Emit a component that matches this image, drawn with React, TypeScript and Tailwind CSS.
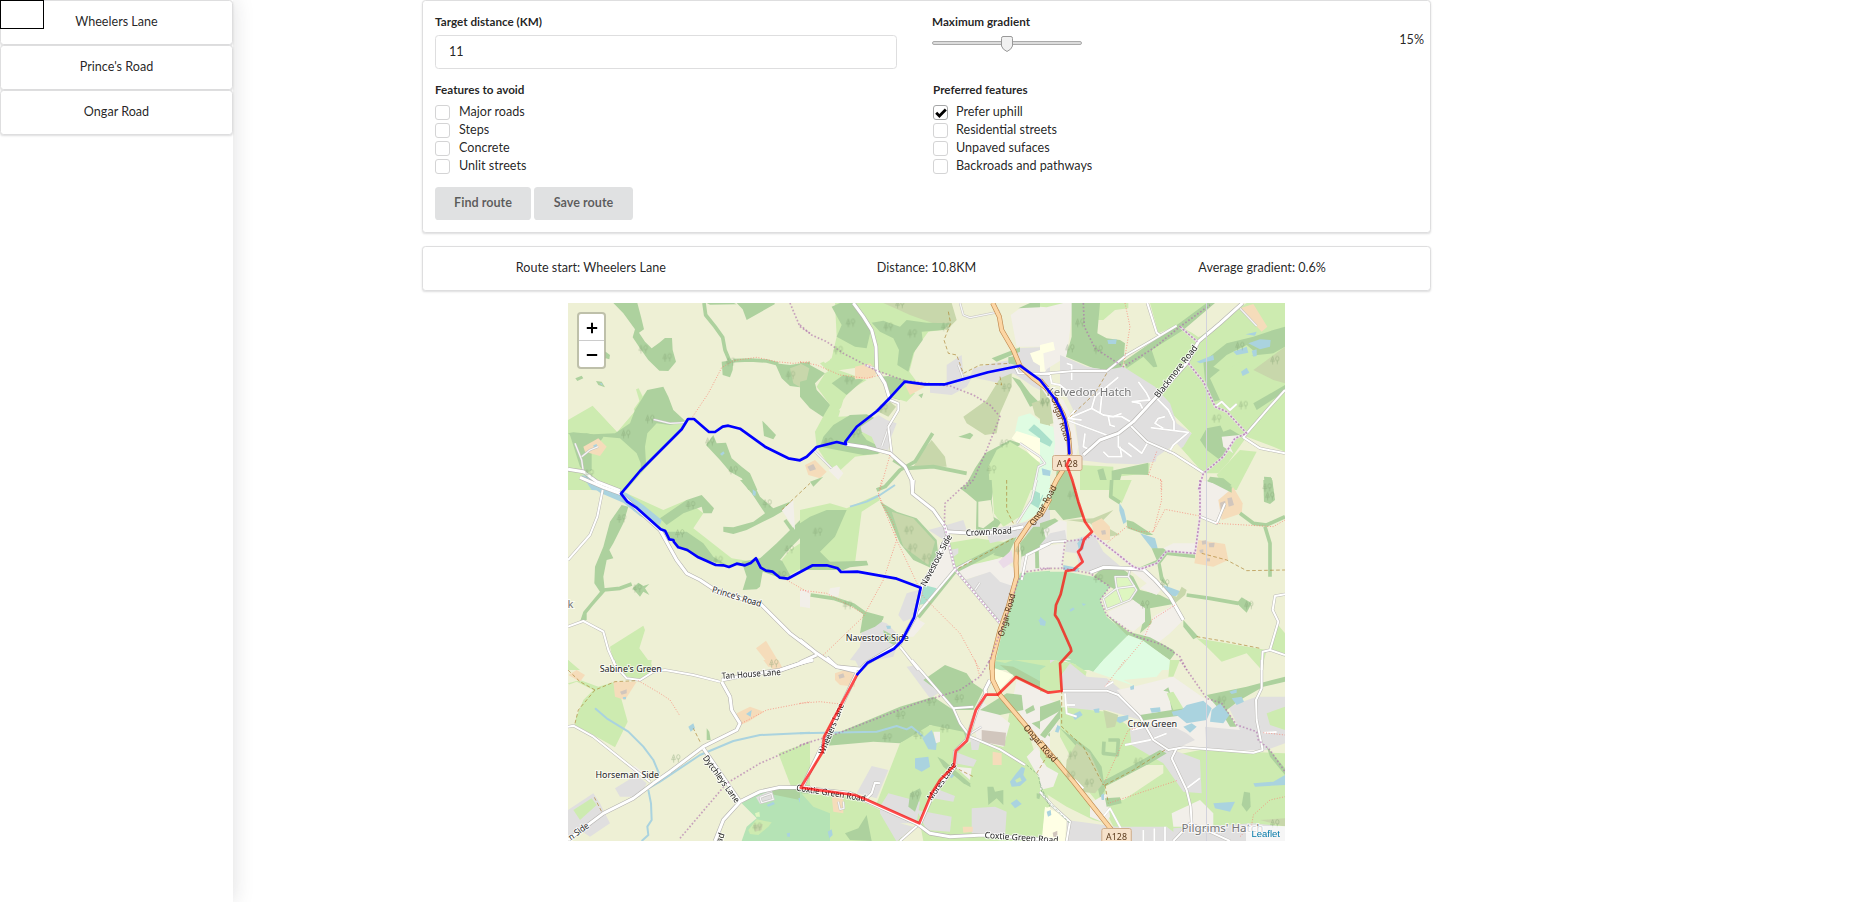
import React from "react";

/* ---------- map data ---------- */

type Row = [string, string];
interface Sector {
  x: number;
  y: number;
  land: Row[];
  lines: Row[];
  trees: string;
}

const FILL: Record<string, string> = {
  f: "#add19e",
  g: "#cdebb0",
  s: "#c8d7ab",
  r: "#e0dfdf",
  y: "#f5dcba",
  l: "#f2efe9",
  w: "#aad3df",
  o: "#b5e3b5",
  p: "#aae0cb",
  t: "#dffce2",
  c: "#ffffe5",
  d: "#eef0d5",
  m: "#ebdbe8",
  b: "#d1c6bd",
  k: "#def6c0",
};

/* Drawn at three units per pixel; each sector covers 240 x 180 px. */
const SECTORS: Sector[] = [
  {
    x: 560, y: 300,
    land: [
      ["f", "160 9 232 9 243 50 252 88 237 98 255 125 275 145 298 128 315 114 336 114 338 150 348 185 325 213 298 212 265 180 240 145 218 112 225 88 190 40"],
      ["f", "530 9 643 9 645 12 560 60 548 28"],
      ["f", "440 9 520 8 530 13 450 14"],
      ["f", "485 185 520 180 518 210 510 232 488 225"],
      ["f", "645 190 690 195 750 185 750 290 720 262 690 258 665 235"],
      ["s", "690 205 725 192 750 195 750 230 725 265 700 250"],
      ["f", "137 155 150 165 148 178 137 175"],
      ["f", "46 235 65 227 70 235 52 243"],
      ["f", "108 243 125 245 135 262 115 255"],
      ["w", "118 250 126 250 128 257"],
      ["g", "24 360 98 317 172 396 262 270 372 362 383 360 200 570 24 570"],
      ["d", "98 316 172 396 225 335 218 322 180 310"],
      ["g", "172 396 228 330 222 360"],
      ["g", "228 268 236 265 252 298 240 308"],
      ["f", "262 270 310 260 325 290 340 330 375 362 330 375 290 370 262 400 255 440 258 490 243 512 242 490 230 460 180 415 130 410 100 450 60 430 24 400 40 397 100 403 165 400 180 390 210 370 225 330"],
      ["f", "30 405 80 400 130 412 95 455 95 510 80 520 60 500"],
      ["y", "70 440 115 415 140 440 120 468 75 455"],
      ["w", "100 436 110 432 112 442 102 444"],
      ["w", "65 525 100 535 135 560 130 572 95 570"],
      ["f", "607 362 620 375 648 405 640 418 612 408"],
      ["f", "438 435 460 405 470 430 498 428 515 475 545 500 570 520 592 570 565 570 545 535 510 515 480 480"],
      ["w", "480 462 490 454 494 460 486 467"],
      ["y", "738 500 750 490 750 525"],
    ],
    lines: [
      ["F", "432 9 437 45 465 80 488 112 495 150 510 185"],
      ["F", "520 182 570 180 620 183 655 192"],
      ["R", "24 508 70 515 110 545 180 572"],
      ["v", "45 430 65 480 70 515"],
      ["v", "65 470 90 450 115 440"],
      ["v", "280 358 330 370 372 368"],
      ["n", "398 350 445 280 485 203 520 182 590 172 650 185 700 190 750 185"],
      ["u", "690 9 705 45 720 80 750 100"],
    ],
    trees: "322 172 270 357 198 402 450 425 520 510 692 225 512 185 88 520 250 147",
  },
  {
    x: 800, y: 300,
    land: [
      ["g", "105 9 395 9 468 60 440 88 385 95 345 150 328 215 350 245 300 245 265 225 190 200 85 215 60 190 95 175 110 110"],
      ["d", "35 130 105 110 90 180 75 190"],
      ["s", "250 9 455 9 470 60 440 90 395 68 330 45"],
      ["f", "95 20 120 9 160 9 195 50 215 80 200 145 165 140 110 110 125 75"],
      ["f", "215 68 250 62 300 80 320 60 380 68 450 70 430 90 365 95 368 120 340 160 325 215 292 195 297 150 280 115 240 95"],
      ["f", "0 185 30 195 75 220 45 250 50 270 100 325 75 355 30 325 0 290"],
      ["s", "0 190 28 205 20 240 0 245"],
      ["g", "75 220 100 205 200 240 150 270 130 300 115 350 215 345 240 460 165 470 105 525 50 440 45 395 75 340 90 315 50 260"],
      ["d", "145 295 240 230 268 270 265 305 220 340 150 355 117 330"],
      ["f", "130 225 190 240 140 285 95 250"],
      ["y", "165 200 210 190 235 215 215 235 165 238"],
      ["f", "100 375 150 345 200 343 225 355 200 375 185 400 200 420 240 440 235 462 190 465 60 440 70 410"],
      ["r", "182 380 235 345 260 360 290 370 270 420 265 450 230 445 215 410 185 395"],
      ["f", "242 230 265 228 320 240 300 300 265 290"],
      ["g", "270 290 310 245 345 280 320 305"],
      ["s", "225 330 270 305 288 320 265 350"],
      ["y", "315 255 345 248 375 260 330 285"],
      ["f", "355 285 370 280 365 295"],
      ["r", "390 250 440 250 440 195 485 165 490 225 520 225 500 260 455 285 390 278"],
      ["l", "632 45 660 25 750 9 750 140 650 140"],
      ["f", "655 25 690 9 750 9 750 20"],
      ["r", "510 230 520 205 580 190 630 180 650 145 750 140 750 285 700 260 640 220 600 250"],
      ["c", "690 160 720 150 725 140 750 130 750 190 735 215 725 200 700 185"],
      ["f", "575 175 660 142 660 155 590 185"],
      ["f", "625 172 650 167 650 195 625 190"],
      ["s", "490 350 560 300 600 235 635 220 635 260 600 340 590 400 555 405 500 370"],
      ["f", "635 230 660 240 690 280 720 310 690 320 660 265"],
      ["s", "695 310 750 290 750 380 705 345"],
      ["t", "655 350 690 340 750 385 750 430 645 395"],
      ["p", "685 390 702 373 750 412 750 437"],
      ["c", "635 415 650 393 750 425 735 490 700 480 680 450"],
      ["f", "555 460 630 420 665 432 570 490 570 570 490 570 525 505"],
      ["g", "565 500 590 450 630 425 680 455 720 490 700 570 570 570"],
      ["t", "715 500 750 480 750 570 700 570"],
      ["s", "370 450 395 420 435 470 440 500 340 500"],
      ["f", "475 410 510 398 520 405 510 418"],
      ["y", "15 495 45 480 80 515 60 535 25 525"],
      ["b", "22 500 40 492 48 508 30 514"],
      ["f", "30 545 70 530 40 560"],
      ["l", "85 510 110 495 130 520 115 540"],
      ["w", "728 508 750 508 750 528 732 528"],
    ],
    lines: [
      ["F", "398 400 345 485 300 510 255 560 230 570"],
      ["F", "280 480 320 505 400 500 500 520"],
      ["R", "160 9 190 50 215 90 228 140 230 210 255 250 270 300"],
      ["r", "270 300 295 310 295 330 265 380 275 460"],
      ["R", "135 432 200 442 270 460 315 500 335 540 337 572"],
      ["v", "195 195 225 205 232 220"],
      ["v", "245 440 270 370"],
      ["v", "480 9 490 45 510 53 600 35"],
      ["v", "475 195 490 235"],
      ["v", "40 450 95 505"],
      ["r", "645 200 655 220 750 222"],
      ["v", "660 430 720 470 735 490 715 500 700 570"],
      ["P", "578 9 598 50 605 90 640 150 660 198 700 235 740 265 750 280"],
      ["u", "0 75 35 105 80 125 130 160 230 212 315 242 450 258 520 285 570 315 600 350 560 450 520 540 490 570"],
      ["n", "0 185 50 195 120 225 200 235 240 225"],
      ["n", "270 465 240 570"],
      ["h", "445 35 452 70 432 120 445 160 470 165 490 220 540 195 630 190"],
      ["h", "600 230 605 255 585 250"],
    ],
    trees: "152 68 337 100 438 80 265 80 115 150 148 240 85 425 168 400 300 12 620 262 735 305 613 430 250 325 575 508",
  },
  {
    x: 1040, y: 300,
    land: [
      ["l", "0 9 100 9 80 170 0 220"],
      ["g", "0 9 70 9 20 22 0 20"],
      ["g", "330 9 510 9 415 75 355 100"],
      ["g", "170 9 265 9 265 25 225 30 190 60 172 60"],
      ["f", "95 9 180 9 172 100 200 115 240 120 255 130 250 190 240 215 210 210 160 205 78 170 95 110"],
      ["w", "202 120 230 118 228 132 205 132"],
      ["g", "250 200 410 75 480 110 620 9 735 9 735 455 700 440 620 410 570 480 545 520 490 520 410 430 455 400 345 290"],
      ["d", "425 75 530 9 600 9 475 112"],
      ["f", "250 185 330 130 420 68 500 9 525 9 430 90 335 150 352 200 340 202 310 170 260 205"],
      ["y", "600 25 640 12 682 80 665 95"],
      ["f", "490 185 560 130 640 110 700 90 735 80 735 140 700 160 600 170 540 210 510 235 540 300 520 305 495 240"],
      ["g", "520 200 560 165 620 135 650 160 600 185 550 215"],
      ["s", "640 210 735 140 735 250 700 240"],
      ["f", "640 310 735 255 735 275 650 330"],
      ["w", "625 130 660 118 692 120 690 140 660 148"],
      ["w", "580 155 620 140 625 158 590 165"],
      ["w", "470 185 520 165 522 180 480 190"],
      ["w", "603 215 620 203 628 218 608 228"],
      ["w", "617 103 650 95 645 107"],
      ["w", "635 152 650 148 650 168 640 170"],
      ["f", "480 420 500 385 550 375 600 405 570 440 540 480 500 450"],
      ["l", "545 410 600 405 570 440 580 460 550 440"],
      ["g", "550 395 590 380 610 340 640 320 560 310 520 330"],
      ["r", "60 165 140 200 200 210 250 200 345 260 390 310 410 370 455 400 430 440 380 480 290 493 200 490 120 480 110 400 100 330 60 250"],
      ["l", "0 250 70 300 100 360 115 440 100 500 40 490 40 350"],
      ["c", "0 135 40 125 45 150 10 160 15 215 0 215"],
      ["s", "0 260 30 300 40 370 0 380"],
      ["t", "0 370 40 380 45 430 35 520 0 570"],
      ["p", "0 388 38 425 30 440 0 425"],
      ["w", "5 505 32 512 30 528 8 525"],
      ["f", "50 510 75 500 110 570 45 570"],
      ["g", "120 495 220 500 220 515 330 490 325 520 230 530 215 570 120 570"],
      ["f", "215 512 325 488 325 525 245 522 235 560 215 570"],
      ["f", "172 510 190 505 200 540 180 540"],
      ["d", "350 470 410 430 490 520 475 570 330 570"],
      ["f", "672 530 695 532 700 570 675 570"],
      ["d", "530 525 600 450 735 460 735 570 560 570"],
      ["g", "530 525 600 450 650 455 590 570 560 570"],
      ["f", "672 530 695 532 700 570 675 570"],
      ["f", "490 570 510 530 550 535 575 555 560 565 520 550 505 570"],
    ],
    lines: [
      ["v", "600 25 650 78"],
      ["r", "0 222 110 212 200 213 260 165 330 125 410 77"],
      ["r", "322 9 350 98 360 105"],
      ["r", "270 375 320 425 400 460 490 518"],
      ["r", "735 270 685 325 620 400 610 412 660 445 735 460"],
      ["a", "80 360 120 375 200 405"],
      ["a", "345 290 385 330 402 365 402 390"],
      ["a", "332 383 445 397 400 435 385 460"],
      ["a", "370 385 345 370 355 355 375 350"],
      ["a", "235 405 235 440 275 470"],
      ["a", "265 428 305 460 322 430"],
      ["a", "190 455 205 470 245 470 240 440"],
      ["a", "295 245 320 280 330 300 275 305"],
      ["a", "235 232 200 260 165 290 155 325 85 355"],
      ["a", "155 325 190 345 220 350 245 340"],
      ["a", "280 370 245 350 205 350 210 375 225 380"],
      ["a", "80 190 95 195 95 240"],
      ["a", "30 225 35 250 60 255 85 275"],
      ["a", "105 330 85 355 125 360"],
      ["a", "135 400 130 440 150 450"],
      ["a", "185 290 180 340"],
      ["a", "275 305 300 310 310 330"],
      ["a", "525 320 545 305 570 330 590 312"],
      ["R", "608 9 540 70 475 125 440 190 345 295 280 365 235 400 180 420 130 465"],
      ["P", "0 240 40 290 70 345 85 400 90 460 75 500 50 540 35 570"],
      ["U", "445 190 490 245 525 320 560 335 620 400 585 415 550 470 490 520 475 570"],
      ["U", "420 80 472 125"],
      ["u", "130 9 133 80 165 145 250 200 340 145 420 80 510 15"],
      ["n", "255 9 270 80 250 200"],
      ["n", "350 455 325 525 365 540 365 570"],
      ["h", "200 220 165 280 85 355"],
    ],
    trees: "120 68 90 145 175 148 705 180 600 138 530 355 610 315 15 308 682 562",
  },
  {
    x: 560, y: 480,
    land: [
      ["g", "24 0 215 0 190 35 310 90 380 60 430 100 400 145 515 235 580 245 505 262 420 235 340 190 300 145 190 60 60 0"],
      ["f", "300 115 380 60 425 45 462 85 455 100 430 100 425 80 370 100 320 135"],
      ["f", "315 155 380 155 430 190 460 230 500 255 420 235 360 205 335 180"],
      ["f", "545 245 600 235 650 190 700 140 730 110 750 115 750 170 720 175 680 215 660 240 690 250 690 290 650 290 608 275 600 320 590 328 548 330 560 290"],
      ["g", "690 285 665 240 690 210 750 170 750 250"],
      ["f", "540 0 575 0 600 50 640 85 690 65 700 75 640 110 560 150 520 162 490 155 490 140 520 142 580 125 615 100 575 40"],
      ["w", "578 28 588 35 586 48 578 45"],
      ["f", "185 75 205 80 190 130 160 190 148 210 160 235 140 240 130 290 135 335 100 375 80 400 80 420 60 425 70 395 120 335 103 310 105 260 130 200 150 125"],
      ["f", "218 325 235 308 250 318 268 312 255 325 268 345 250 335 240 350"],
      ["w", "70 0 130 15 200 40 250 75 305 120 300 135 240 108 190 68 120 38"],
      ["g", "150 500 250 437 255 450 238 505 275 555 275 570 165 570"],
      ["y", "588 505 618 482 665 560 668 570 640 570"],
      ["l", "665 90 700 60 705 150"],
      ["l", "725 330 750 330 750 385 725 380"],
      ["g", "24 540 60 570 24 570"],
    ],
    lines: [
      ["F", "675 120 700 155"],
      ["F", "130 330 180 325 215 312"],
      ["R", "60 -8 130 22 185 42"],
      ["R", "190 50 300 150 350 240 380 280 420 300 480 340 600 370 690 460 750 505"],
      ["r", "128 30 112 110 90 165 24 240"],
      ["r", "24 440 70 423 130 455 145 510 165 555"],
      ["R", "650 575 750 540"],
      ["n", "680 300 750 340"],
      ["h", "665 90 750 10"],
    ],
    trees: "392 75 688 208 665 285 185 115 475 240 622 70 360 160 232 325",
  },
  {
    x: 800, y: 480,
    land: [
      ["g", "0 90 90 70 140 85 230 45 240 60 185 95 165 250 0 260"],
      ["f", "0 130 30 110 80 90 140 90 105 170 60 215 90 245 200 242 205 256 150 262 130 270 0 270"],
      ["f", "240 65 290 95 350 115 410 180 415 225 395 265 340 240 300 190 265 110"],
      ["s", "275 95 340 115 405 185 385 255 310 200"],
      ["r", "385 150 440 135 490 120 500 150 450 160 440 185"],
      ["l", "440 180 465 265 375 370 365 320"],
      ["p", "372 315 410 325 380 370 358 375"],
      ["r", "320 340 355 330 345 410 310 425 295 405"],
      ["g", "440 190 530 175 640 190 600 235 470 270"],
      ["r", "450 210 475 205 475 220 455 235"],
      ["l", "470 265 600 235 650 270 630 340 560 280 490 300"],
      ["r", "495 300 570 275 600 305 645 320 605 430"],
      ["f", "465 262 640 172 640 190 475 275"],
      ["f", "480 25 520 0 585 0 575 60 580 110 605 125 590 145 545 155 528 150 530 65 500 40"],
      ["d", "535 65 572 60 582 120 550 145 535 140"],
      ["g", "575 0 705 0 660 110 610 140 582 100"],
      ["t", "700 20 750 0 750 60 700 110 660 130 690 60"],
      ["p", "700 30 730 45 715 85 690 70"],
      ["r", "555 150 640 135 700 120 750 80 750 140 700 160 570 190"],
      ["f", "600 195 650 170 620 235 580 225"],
      ["f", "660 190 700 140 750 140 750 200 700 215 665 240"],
      ["l", "665 230 750 195 750 265 660 275"],
      ["f", "705 210 716 205 718 265 706 265"],
      ["m", "595 245 635 210 640 245 610 265"],
      ["o", "660 280 750 272 750 570 580 570 620 400"],
      ["w", "715 420 730 412 740 430 725 440"],
      ["w", "625 560 640 552 660 565 640 570"],
      ["r", "190 410 260 430 300 470 280 530 200 545 150 540 180 500"],
      ["f", "190 400 250 410 245 425 225 440 180 460"],
      ["f", "250 450 285 470 290 500 255 480"],
      ["w", "258 437 272 437 272 446 262 447"],
      ["l", "0 330 25 330 20 380 0 380"],
      ["l", "90 325 120 320 115 350 85 345"],
      ["l", "340 410 375 430 340 470 310 470"],
    ],
    lines: [
      ["F", "32 345 100 355 160 375 195 400 250 415"],
      ["F", "355 412 465 275"],
      ["W", "150 80 200 65 240 45 285 15"],
      ["R", "340 0 337 40 400 90 435 140 440 160"],
      ["r", "465 268 350 405"],
      ["r", "440 165 465 268 600 430"],
      ["v", "515 240 465 268"],
      ["v", "525 330 540 308"],
      ["r", "300 500 355 570"],
      ["r", "750 190 680 225 665 300"],
      ["v", "710 0 695 60 650 130"],
      ["R", "440 155 520 160 600 155 670 140"],
      ["R", "445 160 400 260 365 320 345 410 300 490 200 550 180 570"],
      ["R", "0 480 50 520 110 560 180 567"],
      ["R", "0 548 50 525"],
      ["P", "750 55 725 100 690 130 650 190 648 250 650 290 625 380 600 450 580 530 575 570"],
      ["u", "510 0 435 70 433 135 465 268 600 430"],
      ["u", "750 265 680 275 655 300 630 380 600 460 565 550"],
      ["n", "245 0 235 45 280 130 290 180 250 300 190 410 70 525"],
      ["n", "235 45 290 180 370 350 480 460 540 570"],
      ["n", "0 330 80 340 190 400"],
      ["h", "620 0 620 90 640 130"],
      ["h", "475 265 640 175"],
    ],
    trees: "53 155 327 150 338 203 380 233 143 375 660 210",
  },
  {
    x: 1040, y: 480,
    land: [
      ["f", "45 0 95 0 130 110 70 120 45 90 25 90"],
      ["g", "210 0 275 0 245 70 215 50"],
      ["t", "0 0 30 0 0 60"],
      ["f", "0 130 45 115 70 135 40 150 20 190 0 195"],
      ["l", "10 150 60 120 80 125 80 180 20 185"],
      ["r", "0 195 30 160 75 150 80 180"],
      ["s", "80 120 160 115 220 90 180 130 240 165 200 170 150 130"],
      ["y", "155 130 185 115 210 140 210 180 180 180 160 155"],
      ["l", "0 200 75 190 65 265 0 260"],
      ["r", "80 185 160 160 190 215 240 258 160 280 120 270 110 220 75 215"],
      ["w", "112 190 126 170 132 205 118 215"],
      ["w", "70 255 120 265 110 275 70 270"],
      ["w", "238 68 252 90 260 125 250 132 238 92"],
      ["w", "300 160 345 175 355 212 335 205"],
      ["f", "260 120 280 125 340 165 320 165 262 145"],
      ["f", "300 262 350 240 335 205 380 205 385 220 362 250 370 290 385 320 360 300 352 250"],
      ["l", "370 205 400 190 465 190 465 218 380 212"],
      ["f", "380 212 465 222 465 235 380 225"],
      ["o", "0 275 80 275 160 290 210 320 180 360 200 410 265 465 160 570 0 570"],
      ["f", "180 270 240 262 280 290 300 330 360 345 400 365 400 372 330 385 335 430 300 460 315 400 280 360 210 320 160 290"],
      ["l", "205 395 280 360 315 385 315 425 280 455 210 415"],
      ["l", "270 270 320 268 370 320 350 345 300 325 320 310"],
      ["k", "190 355 230 325 225 290 265 290 290 330 270 360 200 388"],
      ["l", "340 410 400 375 430 420 390 460 340 500 300 475 335 430"],
      ["f", "195 400 265 455 330 472 400 510 405 520 390 540 310 485 265 470"],
      ["t", "265 465 310 482 395 545 385 570 160 570"],
      ["g", "470 475 680 510 665 570 620 520 545 545 500 500"],
      ["f", "430 420 475 470 460 478 430 440"],
      ["l", "485 0 560 20 575 40 530 130 480 105"],
      ["y", "580 22 608 70 605 100 545 120 535 60"],
      ["b", "540 68 556 62 556 85 542 88"],
      ["b", "562 55 575 52 582 75 566 80"],
      ["y", "475 180 555 192 565 240 520 260 463 250"],
      ["b", "485 183 500 180 500 192 487 194"],
      ["b", "506 190 524 188 522 202 508 202"],
      ["b", "478 210 490 208 490 218 480 218"],
      ["b", "500 235 510 235 510 244 500 244"],
      ["b", "183 152 196 150 198 163 186 164"],
      ["f", "500 0 530 0 575 20 575 38"],
      ["f", "670 0 697 0 705 60 690 72 672 65"],
      ["w", "370 315 425 335 405 350 385 345"],
      ["s", "425 320 440 330 435 345 405 370 390 345 410 350"],
      ["f", "590 370 605 352 635 370 620 398"],
      ["g", "710 430 735 460 735 530 690 510"],
      ["w", "88 390 100 382 104 388 92 395"],
      ["w", "125 370 138 372 130 378"],
      ["w", "0 410 18 425 15 438 0 435"],
      ["r", "0 540 50 540 50 570 0 570"],
      ["l", "60 545 85 535 110 550 105 570 60 570"],
    ],
    lines: [
      ["F", "215 0 212 50 240 68"],
      ["F", "600 100 640 130 680 135 735 110"],
      ["F", "675 140 690 190 690 290"],
      ["F", "440 345 510 355 595 370"],
      ["R", "150 278 190 262 260 265 310 268 345 300 390 350 430 420"],
      ["v", "270 268 265 290"],
      ["r", "0 200 40 185 80 183"],
      ["v", "190 355 230 325 225 290 265 290 290 330 270 360 200 388 190 355"],
      ["v", "230 325 285 318"],
      ["v", "230 325 245 365"],
      ["r", "480 110 530 130 555 70"],
      ["r", "735 343 705 348 698 390 715 425 690 510 735 525"],
      ["r", "690 510 668 515 665 570"],
      ["U", "480 0 480 110 465 220 380 213 350 250 300 268 280 260 160 165"],
      ["u", "80 183 140 178 155 165"],
      ["u", "75 185 65 265 0 265"],
      ["u", "70 265 150 280 210 320 180 360 200 405 290 470 370 495 420 530 440 570"],
      ["n", "362 0 365 60 340 155 300 155 260 140 200 190"],
      ["n", "340 155 375 88 480 108"],
      ["n", "530 130 700 140 735 120"],
      ["n", "405 375 335 420 310 480 235 570"],
      ["h", "470 470 560 485 660 505"],
      ["h", "485 220 560 240 620 272 735 270"],
    ],
    trees: "97 45 15 155 175 295 315 373 375 310 627 375 690 48",
  },
  {
    x: 560, y: 660,
    land: [
      ["g", "24 0 40 15 24 25"],
      ["g", "24 70 60 60 115 80 165 65 185 120 203 185 165 262 100 225 45 195 50 160 70 120"],
      ["d", "24 75 50 65 100 90 70 120 45 180 24 190"],
      ["g", "160 0 275 0 270 40 230 60 190 45"],
      ["y", "25 45 50 30 75 45 60 65"],
      ["y", "160 65 230 65 195 120 165 110"],
      ["w", "188 112 198 110 198 118 190 118"],
      ["b", "180 95 200 88 200 100 185 104"],
      ["y", "530 160 570 140 612 155 565 185 540 195"],
      ["y", "610 0 655 0 665 20 625 20"],
      ["g", "655 280 750 245 750 380 695 385"],
      ["r", "165 385 230 345 260 370 240 410 180 410"],
      ["r", "24 450 100 400 120 430 150 490 90 530 60 510 24 530"],
      ["g", "40 450 95 415 110 435 60 480"],
      ["l", "205 322 225 318 260 345 230 345"],
      ["o", "545 430 600 395 750 385 750 543 545 543 560 500 590 475"],
      ["f", "640 385 750 385 750 400 720 420 620 400"],
      ["k", "585 460 598 455 600 470 588 470"],
      ["g", "565 510 590 478 635 487 625 500 595 525 570 522"],
      ["s", "580 495 608 492 605 510 585 515"],
      ["r", "588 412 635 390 645 420 600 432"],
      ["w", "620 435 640 425 645 432 625 440"],
      ["w", "715 415 740 410 730 428 718 426"],
      ["w", "680 520 690 518 690 530 682 530"],
      ["w", "385 200 400 190 405 205 392 215"],
      ["w", "558 162 575 150 572 170"],
      ["f", "440 205 448 215 452 240 440 240"],
    ],
    lines: [
      ["W", "105 145 140 175 205 215 250 260 280 300 297 340"],
      ["W", "265 390 273 430 275 480 262 500 265 525 245 543"],
      ["W", "265 385 300 365 420 285 520 243 600 225 750 218"],
      ["r", "480 65 400 45 315 30 280 35 240 60 200 55 165 15 160 0"],
      ["r", "24 200 40 197 100 230 200 310 270 365"],
      ["R", "430 265 540 425"],
      ["R", "485 60 560 45 660 30 750 0"],
      ["R", "24 540 90 490 130 460 220 415 280 370 330 335 430 260 530 210 540 190 515 150 510 110 485 65"],
      ["R", "465 543 490 480 540 425 600 395 660 382 750 383"],
      ["v", "600 412 635 400 640 418 605 428 600 412"],
      ["u", "360 535 500 370 600 310 750 245"],
      ["n", "235 62 300 100 330 120 360 168"],
      ["n", "545 190 620 150 750 125"],
      ["h", "45 190 55 150 105 90 165 65 230 62"],
      ["h", "105 90 60 65 24 30"],
      ["h", "420 245 400 205"],
      ["h", "103 412 125 455"],
    ],
    trees: "348 295 592 500 642 10",
  },
  {
    x: 800, y: 660,
    land: [
      ["r", "165 0 225 0 180 30"],
      ["y", "105 40 140 28 165 45 165 80 120 75 105 60"],
      ["b", "115 45 130 40 134 52 118 56"],
      ["r", "320 20 350 15 415 100 390 115"],
      ["f", "370 60 435 15 500 40 520 70 550 90 520 150 460 150 410 90"],
      ["f", "75 235 300 140 400 110 460 150 500 215 500 235 390 195 370 215 300 250 220 245 75 258"],
      ["g", "300 250 390 195 490 215 500 240 470 270 465 330 360 490 230 430"],
      ["r", "170 400 215 318 265 330 230 415"],
      ["g", "0 400 160 410 280 470 310 543 0 543"],
      ["r", "240 440 265 400 360 425 350 490 300 490 340 500 290 545 240 460"],
      ["o", "0 395 40 440 90 460 90 543 0 543"],
      ["y", "95 405 130 410 130 460 100 455"],
      ["f", "135 520 175 505 200 465 215 543 150 540"],
      ["w", "83 515 95 508 98 525 88 535"],
      ["g", "360 490 470 270 520 240 610 260 630 150 680 200 750 430 750 543 370 543"],
      ["f", "330 400 360 385 365 400 345 455 325 440"],
      ["w", "367 235 395 210 410 250 408 270 385 268"],
      ["w", "345 295 385 290 390 320 365 335 345 325"],
      ["w", "440 345 455 335 465 345 455 355"],
      ["l", "400 215 420 215 420 245 408 250"],
      ["l", "520 170 540 120 630 190 610 260 530 240"],
      ["b", "545 210 618 218 615 258 545 245"],
      ["g", "570 0 750 0 750 20 620 10"],
      ["o", "600 15 640 0 750 20 750 95 650 50"],
      ["f", "600 15 640 20 750 80 750 98 650 55"],
      ["l", "650 60 750 98 750 300 690 230 640 110"],
      ["c", "570 60 585 25 640 45 590 100"],
      ["f", "540 150 620 100 665 105 670 150 600 165"],
      ["f", "695 190 725 180 750 195 750 230"],
      ["f", "675 150 700 135 705 150 680 162"],
      ["r", "465 275 530 300 520 320 465 310"],
      ["r", "350 450 455 470 450 515 380 510"],
      ["r", "405 385 465 408 460 425 400 415"],
      ["r", "515 445 585 440 620 455 615 530 515 520"],
      ["r", "510 230 540 245 535 270 515 270"],
      ["y", "578 275 605 280 605 315 578 315"],
      ["y", "488 500 518 500 518 515 490 518"],
      ["l", "465 320 515 325 510 360"],
      ["f", "412 290 430 300 510 370 512 382 490 370 430 320"],
      ["f", "562 380 580 380 585 395 610 390 610 435 590 415 565 435"],
      ["w", "630 365 645 345 665 320 675 325 670 345 680 360 660 378 635 380"],
      ["g", "645 360 660 352 665 362 650 368"],
      ["w", "632 430 650 418 665 432 645 445"],
      ["l", "680 290 710 260 750 320 740 400 715 350"],
      ["f", "710 400 722 402 718 418 710 415"],
      ["c", "735 445 750 440 750 543 728 535"],
    ],
    lines: [
      ["W", "0 220 230 215 290 198 320 208 335 200 370 230"],
      ["R", "80 -8 110 20 170 35"],
      ["R", "0 10 40 0"],
      ["R", "170 40 70 250 5 385"],
      ["r", "360 490 300 543"],
      ["R", "360 490 400 400 465 320 465 275 500 240 530 150 558 100 555 90 570 60"],
      ["r", "335 0 460 145 480 190 510 230 600 268 675 315"],
      ["r", "460 145 520 140"],
      ["r", "240 370 225 368 215 400 195 420"],
      ["v", "115 425 120 448 132 445 130 425"],
      ["v", "505 225 545 200"],
      ["R", "0 383 150 400 350 490 390 520 450 530 550 525 750 540"],
      ["P", "575 0 578 60 600 105 680 200 750 290"],
      ["u", "0 255 100 225 350 130 480 90 540 50 570 0"],
      ["n", "525 0 540 50"],
      ["n", "0 130 60 125 120 132"],
      ["e", "680 315 715 345 725 395 750 440"],
      ["h", "710 340 740 290"],
      ["h", "460 320 520 350"],
    ],
    trees: "302 165 395 125 478 115 262 232 355 225 435 205 345 405",
  },
  {
    x: 1040, y: 660,
    land: [
      ["o", "70 0 190 0 160 35"],
      ["g", "0 30 45 0 100 10 140 35 130 70 70 90 0 95"],
      ["r", "60 50 90 10 140 50 200 55 250 95 290 140 300 180 200 150 90 150 70 100"],
      ["t", "190 0 390 0 350 50 250 60 290 80 160 35"],
      ["g", "60 140 200 155 270 200 275 255 380 290 480 270 735 280 735 543 400 543 380 500 230 520 200 460 150 400 60 230"],
      ["g", "390 0 420 0 400 50 385 50"],
      ["l", "230 90 280 80 400 50 500 120 520 120 600 200 660 240 640 280 520 270 430 260 300 170"],
      ["r", "270 210 380 190 440 220 465 240 400 270 480 300 485 400 430 395 370 310 275 255"],
      ["r", "565 140 650 110 735 110 735 250 680 270 500 270 495 200 600 210"],
      ["g", "680 160 735 140 735 210 690 195"],
      ["f", "300 165 395 150 385 95 370 92 385 82 405 145 435 145 435 165 300 182"],
      ["g", "380 100 400 95 430 145 400 150"],
      ["f", "500 105 620 80 735 50 735 65 670 80 600 120 560 150 590 200 570 200 540 150"],
      ["w", "410 165 440 135 490 122 515 145 500 180 440 190"],
      ["w", "430 200 455 190 470 200 450 218"],
      ["w", "515 150 540 130 568 165 550 190 510 185"],
      ["w", "575 115 605 110 612 125 590 135"],
      ["w", "330 145 360 142 362 155 335 158"],
      ["w", "395 155 430 148 435 165 400 167"],
      ["w", "95 165 120 153 128 165 105 180"],
      ["w", "568 95 590 88 590 98 575 102"],
      ["w", "270 80 282 75 282 88 272 90"],
      ["w", "215 175 265 165 265 178 240 190"],
      ["w", "45 215 52 195 62 200 55 218"],
      ["w", "160 148 178 145 178 158 165 158"],
      ["w", "520 430 585 425 570 455 525 445"],
      ["w", "640 370 700 365 735 345 735 375 645 380"],
      ["s", "190 150 235 165 225 200 200 205"],
      ["f", "60 205 110 240 150 270 185 320 195 390 180 415 160 320 110 260"],
      ["s", "80 300 110 250 150 280 190 370 165 400 120 395 75 360"],
      ["f", "185 365 270 320 360 270 380 280 280 340 190 382"],
      ["d", "195 380 320 315 370 315 370 340 250 420 200 420"],
      ["g", "0 260 60 300 100 370 200 490 160 480 80 440 0 390"],
      ["l", "0 110 60 130 50 200 0 245"],
      ["f", "0 140 60 120 65 150 0 185"],
      ["f", "0 225 60 150 60 175 15 235"],
      ["l", "0 290 20 320 55 340 40 380 0 390"],
      ["l", "150 430 200 400 210 470 195 490 150 470"],
      ["w", "183 405 192 400 192 420 185 420"],
      ["f", "195 415 240 412 245 430 200 440"],
      ["r", "80 480 230 500 380 500 420 530 420 543 80 543"],
      ["l", "395 460 480 420 520 460 520 500 400 500"],
      ["r", "400 505 640 490 735 500 735 543 400 543"],
      ["c", "15 440 80 470 75 543 5 543"],
      ["w", "20 455 32 450 34 465 24 470"],
      ["b", "38 518 52 512 52 532 40 530"],
      ["f", "605 435 612 395 630 398 632 440 620 455"],
      ["f", "680 260 735 325 735 345 690 290"],
      ["s", "660 480 735 475 735 500"],
    ],
    lines: [
      ["F", "192 245 190 280 232 285 235 240 205 240"],
      ["a", "255 255 330 240 380 220"],
      ["a", "440 385 480 355"],
      ["a", "75 100 80 160 110 170"],
      ["a", "80 135 105 135"],
      ["a", "275 210 320 200"],
      ["a", "190 470 210 445 245 510"],
      ["a", "310 510 310 543"],
      ["a", "343 505 343 543"],
      ["a", "375 500 375 543"],
      ["a", "195 80 220 65"],
      ["a", "670 218 710 216"],
      ["a", "105 360 130 385"],
      ["r", "0 395 40 440 90 485 80 543"],
      ["r", "400 543 450 490 520 520 570 543"],
      ["r", "65 92 200 92 235 105 300 170 340 240 385 270 430 262 640 278 668 270 650 180 648 120 665 85 665 0"],
      ["r", "410 265 395 295 440 390 452 440 455 490"],
      ["P", "0 245 100 365 215 510"],
      ["u", "420 0 500 115 545 130 590 195 650 215 655 240 690 270 735 335"],
      ["n", "190 375 265 210 290 205"],
      ["n", "410 362 205 430"],
      ["n", "255 0 195 80"],
      ["n", "600 530 635 495 640 465 690 420 735 410"],
      ["n", "670 218 735 225"],
      ["h", "65 90 65 200 130 260 190 375"],
      ["h", "195 375 280 330 375 270"],
      ["h", "195 375 205 430"],
      ["e", "0 370 20 420 90 490"],
    ],
    trees: "98 285 148 368 92 345 545 120 295 305 705 490",
  },
];

interface Stroke {
  color: string;
  width: number;
  casing?: string;
  casingWidth?: number;
  dash?: string;
  opacity?: number;
}

const STROKES: Record<string, Stroke> = {
  F: { color: "#add19e", width: 11 },
  W: { color: "#aad3df", width: 6 },
  v: { color: "#f6f6f6", width: 4, casing: "#c4c2bf", casingWidth: 7 },
  a: { color: "#ffffff", width: 5.5, casing: "#d0cecb", casingWidth: 7 },
  r: { color: "#ffffff", width: 6, casing: "#bcbab6", casingWidth: 9 },
  R: { color: "#ffffff", width: 9, casing: "#b5b3b0", casingWidth: 12.5 },
  P: { color: "#fcd6a4", width: 11, casing: "#c08a50", casingWidth: 15 },
  u: { color: "#ac6bac", width: 5, dash: "5 6", opacity: 0.6 },
  U: { color: "#b070b0", width: 5, dash: "6 5", casing: "#efe4ef", casingWidth: 8, opacity: 0.75 },
  n: { color: "#fa8072", width: 2.8, dash: "3 5", opacity: 0.8 },
  h: { color: "#ac8331", width: 2.8, dash: "11 7", opacity: 0.7 },
  e: { color: "#7ba57b", width: 2.6, dash: "8 5", opacity: 0.7 },
};

const ORDER = ["F", "W", "v", "a", "r", "R", "P", "n", "h", "e", "u", "U"];

const pairs = (s: string): [number, number][] => {
  const n = s.split(" ").map(Number);
  const out: [number, number][] = [];
  for (let i = 0; i < n.length; i += 2) out.push([n[i], n[i + 1]]);
  return out;
};

const BLUE =
  "1069.3,453.3 1068.3,436.7 1065,420 1060,408 1055,399 1040,380 1020,365.7 988,372.3 945,384.3 925,384.3 904.7,381.7 890,397.7 877,411 856.7,426.7 845.3,441.7 846,444.3 836.7,442 816.7,447 806.7,456.7 800,460.3 788.3,458.3 765,446.7 740,428.7 728.3,425.7 722.7,426.7 715,432 709,432 694,419 688,419 681.7,429.3 640,471 621,493.7 627.3,501.7 636,507.3 660.7,529.3 665,530.7 669.3,539.3 673.3,540 674,542 678.3,547.3 687.3,550 698.3,557.3 715.7,565 723.3,565.3 729,567 736.7,563.7 745,565.3 750.7,563 756,558.3 760.7,567.7 766,570.7 772.7,571.7 780,577.7 787.7,578.7 812.7,565.3 826.7,565.3 837.7,568.3 841,572 857.3,571.7 896.7,578.7 920.7,587.7 914,617.7 901.7,641 894,648.7 867.7,662.7 857.3,674.3";
const RED =
  "857.3,674.3 824,737 822.7,751.7 800.7,787.7 855,795 865,799 919.3,823.3 931.7,793.3 940,780 954,766 955.7,751 966.7,740.7 976,710 986,694.7 997.7,694.7 1016,677 1048.3,692.7 1061.7,691 1060,663.3 1071.3,651 1070.7,648 1058.3,620 1055,615 1056,605 1060.7,594.3 1066,571 1073.3,570 1082.7,561.7 1078,551.7 1081.3,548.7 1084.3,539 1092,531.7 1085,521.7 1078.3,501.7 1072.3,480 1066.7,465 1069.3,459.3";

interface Label {
  text: string;
  x: number;
  y: number;
  w: number;
  size?: number;
  rot?: number;
  color?: string;
}

const LABELS: Label[] = [
  { text: "Kelvedon Hatch", x: 1046.5, y: 396, w: 85, size: 11.5, color: "#777777" },
  { text: "Pilgrims' Hatch", x: 1181.5, y: 832, w: 82, size: 11.5, color: "#777777" },
  { text: "k", x: 567.5, y: 608, w: 6, size: 11.5, color: "#777777" },
  { text: "Navestock Side", x: 845.7, y: 641, w: 63 },
  { text: "Sabine's Green", x: 599.7, y: 672, w: 62 },
  { text: "Horseman Side", x: 595.5, y: 778, w: 63.5 },
  { text: "Crow Green", x: 1127.5, y: 727, w: 49.5 },
  { text: "Blackmore Road", x: 1158.5, y: 398.5, w: 64, rot: -52 },
  { text: "Ongar Road", x: 1051, y: 398, w: 46, rot: 72, color: "#5c3418" },
  { text: "Ongar Road", x: 1034.5, y: 526.5, w: 45, rot: -60, color: "#4c3018" },
  { text: "Ongar Road", x: 1003.5, y: 637, w: 44, rot: -74, color: "#4c3018" },
  { text: "Ongar Road", x: 1023, y: 728, w: 46, rot: 49, color: "#4c3018" },
  { text: "Crown Road", x: 966, y: 536, w: 46, rot: -3 },
  { text: "Navestock Side", x: 925.5, y: 587, w: 57, rot: -62 },
  { text: "Prince's Road", x: 711.5, y: 592, w: 51, rot: 17 },
  { text: "Tan House Lane", x: 722, y: 679, w: 59, rot: -4 },
  { text: "Dytchleys Lane", x: 702.5, y: 758, w: 56, rot: 54 },
  { text: "Wheelers Lane", x: 824, y: 755, w: 54, rot: -68 },
  { text: "Coxtie Green Road", x: 796, y: 790.5, w: 70, rot: 9 },
  { text: "Mores Lane", x: 931.5, y: 801, w: 44, rot: -55 },
  { text: "Coxtie Green Road", x: 984.5, y: 838, w: 74, rot: 4 },
  { text: "n Side", x: 571, y: 840.5, w: 23, rot: -36 },
  { text: "Road", x: 718, y: 853, w: 20, rot: -70 },
];

function Shield({ x, y }: { x: number; y: number }) {
  return (
    <g>
      <rect x={x} y={y} width={29.5} height={15} rx={2} fill="#f6e2cb" stroke="#cfae8c" strokeWidth={1} />
      <text x={x + 14.7} y={y + 11} textAnchor="middle" fontSize={8.8} textLength={21} fill="#5a3a1c">
        A128
      </text>
    </g>
  );
}

function MapView() {
  return (
    <div className="relative mx-auto mt-3 h-[538px] w-[717px] overflow-hidden bg-[#eef0d5]">
      <svg viewBox="568 303 717 538" className="block h-full w-full" style={{ fontFamily: '"Noto Sans", sans-serif' }}>
        {SECTORS.map((s, i) => (
          <g key={i} transform={`translate(${s.x} ${s.y}) scale(.33333)`}>
            {s.land.map(([k, d], j) => (
              <polygon key={j} points={d} fill={FILL[k]} />
            ))}
          </g>
        ))}
        {ORDER.map((k) =>
          [0, 1].map((pass) => {
            const st = STROKES[k];
            if (pass === 0 && !st.casing) return null;
            return (
              <g key={k + pass}>
                {SECTORS.map((s, i) => (
                  <g key={i} transform={`translate(${s.x} ${s.y}) scale(.33333)`} fill="none" strokeLinejoin="round">
                    {s.lines
                      .filter((l) => l[0] === k)
                      .map((l, j) => (
                        <polyline
                          key={j}
                          points={l[1]}
                          stroke={pass ? st.color : st.casing}
                          strokeWidth={pass ? st.width : st.casingWidth}
                          strokeDasharray={pass ? st.dash : undefined}
                          opacity={st.opacity ?? 1}
                        />
                      ))}
                  </g>
                ))}
              </g>
            );
          })
        )}
        {SECTORS.map((s, i) => (
          <g key={i} transform={`translate(${s.x} ${s.y}) scale(.33333)`} fill="none" stroke="#7f9f70" strokeWidth={2.2} opacity={0.5}>
            {pairs(s.trees).map(([x, y], j) => (
              <g key={j} transform={`translate(${x} ${y})`}>
                <path d="M-7 13V-4M-13 4L-7-11L-2 4ZM7 12V0" />
                <ellipse cx={7} cy={-4} rx={5} ry={7} />
              </g>
            ))}
          </g>
        ))}
        <line x1={1206.5} x2={1206.5} y1={303} y2={841} stroke="#d2d2dc" strokeWidth={1} />
        {LABELS.map((l, i) => (
          <text
            key={i}
            transform={`translate(${l.x} ${l.y}) rotate(${l.rot ?? 0})`}
            fontSize={l.size ?? 8.8}
            textLength={l.w}
            lengthAdjust="spacingAndGlyphs"
            fill={l.color ?? "#222222"}
            stroke="#ffffff"
            strokeOpacity={0.7}
            strokeWidth={l.color && !l.size ? 0 : 2}
            paintOrder="stroke"
          >
            {l.text}
          </text>
        ))}
        <Shield x={1052.5} y={455.5} />
        <Shield x={1101.8} y={828.5} />
        <g fill="none" strokeWidth={2.7} strokeLinejoin="round" strokeLinecap="round">
          <polyline points={RED} stroke="#ff0000" opacity={0.7} />
          <polyline points={BLUE} stroke="#0000ff" />
        </g>
      </svg>
      <div className="absolute top-[9px] left-[9px] flex w-[29px] flex-col rounded-[4px] border-2 border-black/20 bg-white bg-clip-padding">
        <button className="flex h-[27px] items-center justify-center border-b border-[#ccc] pt-px">
          <svg width="12" height="12" viewBox="0 0 12 12">
            <path d="M6 .8V11.2M.8 6H11.2" stroke="#000" strokeWidth="2" />
          </svg>
        </button>
        <button className="flex h-[26px] items-center justify-center pt-px">
          <svg width="12" height="12" viewBox="0 0 12 12">
            <path d="M.8 6H11.2" stroke="#000" strokeWidth="2" />
          </svg>
        </button>
      </div>
      <div className="absolute right-0 bottom-0 h-[15px] bg-white/70 px-[5px] font-['Liberation_Sans',sans-serif] text-[9.5px] leading-[15px] text-[#0078a8]">
        Leaflet
      </div>
    </div>
  );
}

/* ---------- form ---------- */

const card = "rounded-[3.6px] border border-[#dededf] bg-white shadow-[0_1px_2px_0_rgba(34,36,38,0.15)]";

function Check({ label, checked }: { label: string; checked?: boolean }) {
  return (
    <label className="flex h-[18px] items-start gap-2">
      <span
        className={
          checked
            ? "mt-px flex h-[15px] w-[15px] items-center justify-center rounded-[3px] border border-[#a5a6a7]"
            : "mt-px flex h-[15px] w-[15px] items-center justify-center rounded-[3px] border border-[#d4d4d5]"
        }
      >
        {checked && (
          <svg width="12" height="10" viewBox="0 0 12 10">
            <path d="M1.2 4.8L4.4 8L10.8 1.6" fill="none" stroke="#000" strokeWidth="2.8" />
          </svg>
        )}
      </span>
      <span className="leading-[15px]">{label}</span>
    </label>
  );
}

const AVOID = ["Major roads", "Steps", "Concrete", "Unlit streets"];
const PREFER = ["Prefer uphill", "Residential streets", "Unpaved sufaces", "Backroads and pathways"];
const heading = "block text-[11.7px] leading-[15px] font-bold";

export default function App() {
  return (
    <div className="relative flex h-[902px] w-full overflow-hidden bg-white font-['Lato',sans-serif] text-[12.6px] text-black/87">
      <aside className="h-full w-[233px] shrink-0 bg-white shadow-[0_0_20px_rgba(34,36,38,0.15)]">
        {["Wheelers Lane", "Prince's Road", "Ongar Road"].map((n) => (
          <div key={n} className={`${card} flex h-[45px] items-center justify-center pb-px`}>
            {n}
          </div>
        ))}
      </aside>
      <div className="absolute top-0 left-0 h-[29px] w-[44px] border border-black bg-white" />

      <main className="ml-[189px] w-[1009px]">
        <section className={`${card} grid h-[233px] grid-cols-[497px_1fr] px-3 pt-[13px]`}>
          <div>
            <label className={heading}>Target distance (KM)</label>
            <div className="mt-[6px] flex h-[34px] w-[462px] items-center rounded-[3.6px] border border-[#dededf] px-[13px]">11</div>
            <span className={`${heading} mt-[13px] mb-[7px]`}>Features to avoid</span>
            <div className="[&_label]:gap-[9px]">
              {AVOID.map((a) => (
                <Check key={a} label={a} />
              ))}
            </div>
            <div className="mt-[11px] flex gap-[3px]">
              <button className="h-[33px] w-[96px] rounded-[3.6px] bg-[#e0e1e2] font-bold text-black/60">Find route</button>
              <button className="h-[33px] w-[99px] rounded-[3.6px] bg-[#e0e1e2] font-bold text-black/60">Save route</button>
            </div>
          </div>
          <div>
            <div className="flex h-[68px] justify-between">
              <div>
                <label className={heading}>Maximum gradient</label>
                <svg className="mt-[6px] block" width="150" height="18" viewBox="0 0 150 18">
                  <rect x=".5" y="6.5" width="149" height="3" rx="1.5" fill="#dcdcdc" stroke="#aaaaaa" />
                  <path
                    d="M71 1.500H79Q80.500 1.500 80.500 3.500V11Q79.500 14.500 75 16.500Q70.500 14.500 69.500 11V3.500Q69.500 1.500 71 1.500Z"
                    fill="#f1f1f1"
                    stroke="#999999"
                    strokeLinejoin="round"
                  />
                </svg>
              </div>
              <span className="-mr-[6px] pt-[17px]">15%</span>
            </div>
            <div className="pl-px">
              <span className={`${heading} mb-[7px]`}>Preferred features</span>
              {PREFER.map((p, i) => (
                <Check key={p} label={p} checked={i === 0} />
              ))}
            </div>
          </div>
        </section>

        <section className={`${card} mt-[13px] grid h-[45px] grid-cols-3 items-center pb-px text-center`}>
          <span>Route start: Wheelers Lane</span>
          <span>Distance: 10.8KM</span>
          <span>Average gradient: 0.6%</span>
        </section>

        <MapView />
      </main>
    </div>
  );
}
